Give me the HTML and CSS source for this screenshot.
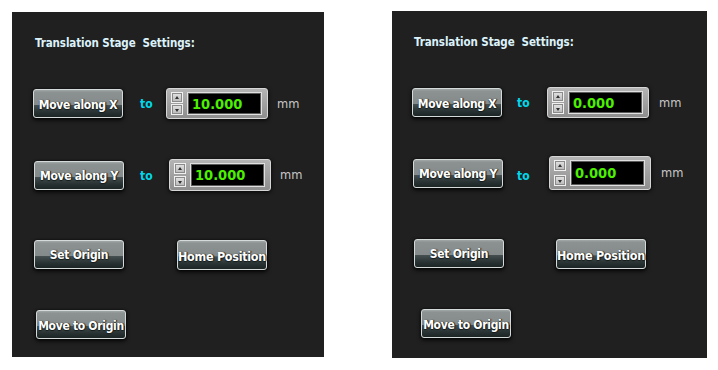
FILE: index.html
```html
<!DOCTYPE html>
<html>
<head>
<meta charset="utf-8">
<link rel="stylesheet" href="styles.css">
</head>
<body>
<div class="page">
  <section class="panel panel-a">
    <h1 class="title">Translation Stage&nbsp; Settings:</h1>
    <div class="row row-1">
      <button class="btn">Move along X</button>
      <span class="to">to</span>
      <div class="spin">
        <div class="arrows"><span class="arr up"></span><span class="arr down"></span></div>
        <div class="field">10.000</div>
      </div>
      <span class="unit">mm</span>
    </div>
    <div class="row row-2">
      <button class="btn">Move along Y</button>
      <span class="to">to</span>
      <div class="spin">
        <div class="arrows"><span class="arr up"></span><span class="arr down"></span></div>
        <div class="field">10.000</div>
      </div>
      <span class="unit">mm</span>
    </div>
    <div class="row row-3">
      <button class="btn">Set Origin</button>
      <button class="btn btn-home">Home Position</button>
    </div>
    <div class="row row-4">
      <button class="btn">Move to Origin</button>
    </div>
  </section>
  <section class="panel panel-b">
    <h1 class="title">Translation Stage&nbsp; Settings:</h1>
    <div class="row row-1">
      <button class="btn">Move along X</button>
      <span class="to">to</span>
      <div class="spin">
        <div class="arrows"><span class="arr up"></span><span class="arr down"></span></div>
        <div class="field">0.000</div>
      </div>
      <span class="unit">mm</span>
    </div>
    <div class="row row-2">
      <button class="btn">Move along Y</button>
      <span class="to">to</span>
      <div class="spin">
        <div class="arrows"><span class="arr up"></span><span class="arr down"></span></div>
        <div class="field">0.000</div>
      </div>
      <span class="unit">mm</span>
    </div>
    <div class="row row-3">
      <button class="btn">Set Origin</button>
      <button class="btn btn-home">Home Position</button>
    </div>
    <div class="row row-4">
      <button class="btn">Move to Origin</button>
    </div>
  </section>
</div>
</body>
</html>
```
FILE: styles.css
```css
* { box-sizing: border-box; }
html, body { margin: 0; padding: 0; background: #ffffff; }
body { width: 718px; height: 370px; overflow: hidden; font-family: "DejaVu Sans Condensed", "DejaVu Sans", Verdana, sans-serif; }

.page { display: flex; align-items: flex-start; }

.panel {
  background: #202020;
  display: flex;
  flex-direction: column;
  align-items: flex-start;
}
.panel-a { margin: 12px 0 0 12px; width: 312px; height: 345px; padding: 0 0 0 21px; }
.panel-b { margin: 11px 0 0 68px; width: 315px; height: 347px; padding: 0 0 0 20px; }

.title {
  margin: 25px 0 0 2px;
  font-size: 11.5px;
  font-weight: bold;
  color: #dcf2fb;
  line-height: 13px;
  letter-spacing: -0.1px;
  white-space: nowrap;
}

.row { display: flex; align-items: center; }
.panel-a .row-1 { margin-top: 38px; }
.panel-a .row-2 { margin-top: 40px; margin-left: 1px; }
.panel-a .row-3 { margin-top: 47px; margin-left: 1px; }
.panel-a .row-4 { margin-top: 40px; margin-left: 3px; }

.panel-b .row-1 { margin-top: 38px; }
.panel-b .row-2 { margin-top: 38px; margin-left: 1px; }
.panel-b .row-3 { margin-top: 47px; margin-left: 2px; }
.panel-b .row-4 { margin-top: 40px; margin-left: 9px; }

.btn {
  width: 90px;
  height: 29px;
  padding: 0;
  border: 1px solid #d4dada;
  border-radius: 3px;
  background: linear-gradient(to bottom, #a2a8a8 0%, #8c9292 8%, #858b8b 54%, #465050 56%, #2a3434 80%, #1c2424 100%);
  box-shadow: 0 2px 4px rgba(0,0,0,0.9), 0 0 2px rgba(0,0,0,0.8);
  color: #ffffff;
  font-family: "DejaVu Sans Condensed", "DejaVu Sans", Verdana, sans-serif;
  font-size: 12px;
  font-weight: bold;
  letter-spacing: -0.3px;
  text-shadow: 0 1px 1px #141a1a, 1px 0 1px #141a1a;
  white-space: nowrap;
  padding-top: 2px;
}
.btn-home { margin-left: 53px; margin-top: 2px; height: 30px; font-size: 12.5px; }
.panel-b .btn-home { margin-left: 52px; }

.to {
  color: #00d8ea;
  font-weight: bold;
  font-size: 12px;
  margin-left: 17px;
  width: 12px;
}
.panel-b .to { margin-left: 15px; }
.row-2 .to { margin-left: 16px; margin-top: 2px; }
.panel-b .row-2 .to { margin-left: 14px; margin-top: 5px; }

.spin {
  display: flex;
  align-items: center;
  margin-left: 14px;
  width: 102px;
  height: 31px;
  padding: 3px 5px 3px 4px;
  border: 1px solid #d6d6d6;
  border-radius: 3px;
  background: linear-gradient(to bottom, #b4b4b4, #8e8e8e);
  box-shadow: 0 1px 4px rgba(0,0,0,0.9);
}
.panel-b .spin { margin-left: 18px; }
.row-2 .spin { margin-left: 17px; height: 32px; }
.panel-b .row-2 .spin { margin-left: 20px; height: 34px; }

.arrows {
  display: flex;
  flex-direction: column;
  justify-content: space-between;
  height: 100%;
  width: 12px;
  margin-right: 4px;
}
.arr {
  position: relative;
  display: block;
  width: 12px;
  height: 11px;
  background: linear-gradient(to bottom, #e4e4e4, #b8b8b8);
  border: 1px solid #f0f0f0;
  box-shadow: inset 0 0 0 1px #8a8a8a;
}
.arr::after {
  content: "";
  position: absolute;
  left: 3px;
  width: 0; height: 0;
  border-left: 2px solid transparent;
  border-right: 2px solid transparent;
}
.arr.up::after { top: 3px; border-bottom: 3px solid #303030; }
.arr.down::after { top: 4px; border-top: 3px solid #303030; }

.field {
  flex: 1;
  height: 100%;
  background: #000;
  border: 1px solid #e0e0e0;
  box-shadow: inset 0 0 0 1px #5a5a5a;
  color: #4cf000;
  font-family: "DejaVu Sans Condensed", "DejaVu Sans", Verdana, sans-serif;
  font-size: 14.5px;
  font-weight: bold;
  display: flex;
  align-items: center;
  padding-left: 4px;
  letter-spacing: 0px;
}

.unit {
  color: #c8c8c8;
  font-size: 11.5px;
  font-family: "DejaVu Sans", Verdana, sans-serif;
  margin-left: 9px;
}
.panel-b .unit { margin-left: 10px; }
```
